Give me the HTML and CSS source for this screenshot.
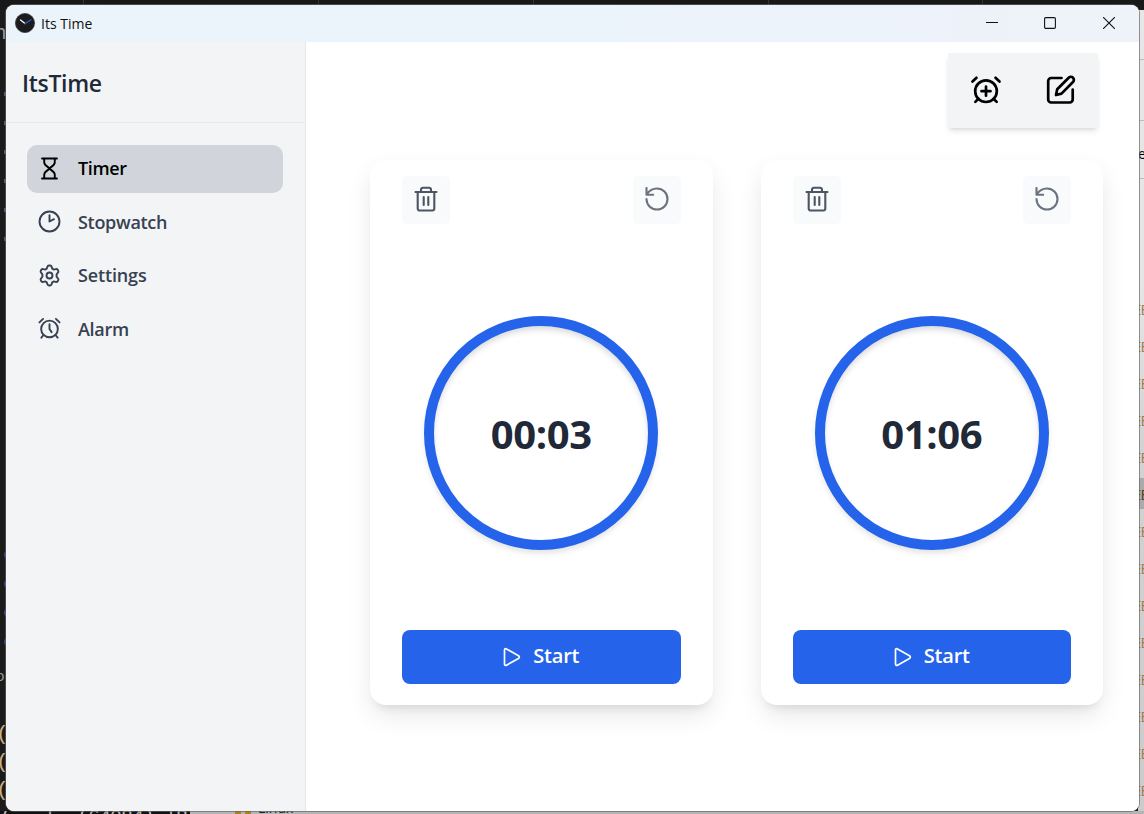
FILE: index.html
```html
<!DOCTYPE html>
<html lang="en">
<head>
<meta charset="utf-8">
<title>Its Time</title>
<link rel="stylesheet" href="styles.css">
</head>
<body>
<svg class="defs" width="0" height="0" aria-hidden="true">
  <symbol id="trash" viewBox="0 0 24 26"><path d="M1.500 6h21M7 6V3.600A2 2 0 0 1 9 1.800h6a2 2 0 0 1 2 1.800V6M3.700 6v16.500a2 2 0 0 0 2 2h12.600a2 2 0 0 0 2-2V6M9.700 11v8M14.300 11v8"/></symbol>
  <symbol id="reset" viewBox="0 0 24 24"><path d="M1.500 1v6.700h6.700M1.500 7.700C4 3.500 7.500 1.500 12 1.500A10.500 10.500 0 1 1 1.500 12"/></symbol>
  <symbol id="play" viewBox="0 0 18 20"><path d="M1.500 3v14c0 1.200 1 1.700 2 1.200l12-6.800c1.100-.6 1.100-2 0-2.600L3.500 1.900C2.500 1.300 1.500 1.900 1.500 3Z"/></symbol>
</svg>
<div class="desktop">
  <i class="tab-line t1"></i><i class="tab-line t2"></i><i class="tab-line t3"></i><i class="tab-line t4"></i><i class="tab-line t5"></i>
  <div class="editor">
    <span class="frag f-h">h</span><span class="frag f-o">o</span>
    <div class="dots"><i></i><i></i><i></i><i></i></div>
    <div class="ticks"><i></i><i></i><i></i><i></i><i></i><i></i></div>
    <div class="parens"><span>(</span><span>(</span><span>(</span></div>
  </div>
  <div class="panel">
    <i class="rule r1"></i><i class="rule r2"></i><i class="rule r3"></i><i class="mark"></i>
    <span class="panel-e">e</span>
    <div class="files"><span>EE</span><span>EE</span><span>EE</span><span>EE</span><span>EE</span><span class="current">EE</span><span>EE</span><span>EE</span><span>EE</span><span>EE</span><span>EE</span><span>EE</span><span>EE</span><span>EE</span></div>
  </div>
  <div class="taskline"><span class="code">( &nbsp; | &nbsp;(64084) |B</span><i class="penguin"></i><span class="linux">Linux</span></div>

  <div class="window">
    <header class="titlebar">
      <svg class="app-icon" viewBox="0 0 20 20"><circle cx="10" cy="10" r="9.600" fill="#1b1b1d" stroke="#3b4046" stroke-width=".8"/><path d="M5.500 7l4.500 3.600" stroke="#fff" stroke-width="1.300"/><path d="M10 10.600l6-3.800" stroke="#2e5da8" stroke-width="1.300"/></svg>
      <span class="app-name">Its Time</span>
      <div class="controls">
        <svg viewBox="0 0 12 12"><path d="M0 5.500h12"/></svg>
        <svg viewBox="0 0 12 12"><rect x=".6" y=".6" width="10.800" height="10.800" rx="1.200"/></svg>
        <svg viewBox="0 0 12 12"><path d="M.3.3l11.400 11.400M11.700.3L.3 11.700"/></svg>
      </div>
    </header>
    <div class="body">
      <aside class="sidebar">
        <div class="brand"><h1>ItsTime</h1></div>
        <nav>
          <a class="active"><svg viewBox="0 0 24 24"><path d="M4.200 1.500h15.600M4.200 22.500h15.600M6.500 1.500v4.200C6.500 9 12 11 12 12s-5.500 3-5.500 6.300v4.200M17.500 1.500v4.200C17.500 9 12 11 12 12s5.500 3 5.500 6.300v4.200"/></svg><span class="n-timer">Timer</span></a>
          <a><svg viewBox="0 0 24 24"><circle cx="12" cy="12" r="10.400"/><path d="M12 5.500V12l4.700-2.400"/></svg><span class="n-stop">Stopwatch</span></a>
          <a><svg viewBox="0 0 24 24"><circle cx="12" cy="12" r="3.100"/><path d="M9.700 3.100c.3-1.100.9-1.500 1.700-1.500h1.200c.8 0 1.400.4 1.700 1.500l.5 1.700 1.800 1 1.700-.4c1.100-.3 1.800 0 2.200.7l.6 1c.4.7.3 1.400-.5 2.200L19.400 10.800v2.400l1.200 1.500c.8.8.9 1.500.5 2.200l-.6 1c-.4.7-1.100 1-2.200.7l-1.700-.4-1.800 1-.5 1.700c-.3 1.100-.9 1.500-1.700 1.500h-1.200c-.8 0-1.400-.4-1.700-1.500l-.5-1.700-1.800-1-1.700.4c-1.100.3-1.800 0-2.200-.7l-.6-1c-.4-.7-.3-1.400.5-2.200l1.200-1.500v-2.400L3.400 9.300c-.8-.8-.9-1.500-.5-2.200l.6-1c.4-.7 1.100-1 2.200-.7l1.700.4 1.800-1Z"/></svg><span class="n-set">Settings</span></a>
          <a><svg viewBox="0 0 24 24"><circle cx="12" cy="12.500" r="8.700"/><path d="M12 7.500v5l2.200 3.300M1.500 5.600L5.300 2M22.500 5.600L18.700 2M5.800 18.800l-2.300 2.800M18.200 18.800l2.300 2.800"/></svg><span class="n-alarm">Alarm</span></a>
        </nav>
      </aside>
      <main>
        <div class="toolbar">
          <svg viewBox="0 0 32 32"><circle cx="16" cy="17.200" r="10.800"/><path d="M16 12.700v9M11.500 17.200h9M2.500 7.500l4-3.700M29.500 7.500l-4-3.700M8.500 24.800l-3.200 3.100M23.500 24.800l3.200 3.100"/></svg>
          <svg viewBox="0 0 32 32"><path d="M16.500 4H6.200a3 3 0 0 0-3 3v18.500a3 3 0 0 0 3 3h18.500a3 3 0 0 0 3-3V15.700M11 21l1.200-5.700L23.700 3.700a3 3 0 0 1 4.300 4.300L16.500 19.600Z"/></svg>
        </div>
        <div class="cards">
          <section class="card">
            <div class="actions"><button class="icon-btn"><svg class="i-trash"><use href="#trash"/></svg></button><button class="icon-btn reset"><svg class="i-reset"><use href="#reset"/></svg></button></div>
            <div class="dial"><span>00:03</span></div>
            <button class="start"><svg><use href="#play"/></svg><span>Start</span></button>
          </section>
          <section class="card">
            <div class="actions"><button class="icon-btn"><svg class="i-trash"><use href="#trash"/></svg></button><button class="icon-btn reset"><svg class="i-reset"><use href="#reset"/></svg></button></div>
            <div class="dial"><span>01:06</span></div>
            <button class="start"><svg><use href="#play"/></svg><span>Start</span></button>
          </section>
        </div>
      </main>
    </div>
  </div>
</div>
</body>
</html>
```
FILE: styles.css
```css
* { box-sizing: border-box; }
body { margin: 0; font-family: "Open Sans", "Noto Sans", sans-serif; }
button { border: 0; padding: 0; font: inherit; }
svg { fill: none; stroke: currentColor; stroke-linecap: round; stroke-linejoin: round; flex: none; }
.defs { position: absolute; }

.desktop { position: relative; width: 1144px; height: 814px; overflow: hidden; background: #181818; }
.tab-line { position: absolute; top: 0; width: 1px; height: 5px; background: #333; }
.t1 { left: 83px; } .t2 { left: 318px; } .t3 { left: 533px; } .t4 { left: 768px; } .t5 { left: 982px; }

.editor { position: absolute; left: 0; top: 10px; width: 6px; height: 804px; overflow: hidden; background: #1b1b1b; }
.frag { position: absolute; color: #999; font: 15px/18px "Liberation Sans", sans-serif; }
.f-h { left: -5px; top: 13px; font-size: 20px; }
.f-o { left: -4px; top: 657px; }
.dots { position: absolute; left: 4px; top: 541px; display: grid; gap: 21px; }
.dots i { width: 8px; height: 8px; border-radius: 50%; background: #2b4b9b; }
.ticks { position: absolute; left: 4px; top: 82px; display: grid; gap: 25px; }
.ticks i { width: 2px; height: 4px; background: #46607e; }
.parens { position: absolute; left: -1px; top: 711px; display: grid; color: #c9b089; font: 21px/28px "Liberation Mono", monospace; }
.parens span { margin-left: -3px; }

.panel { position: absolute; left: 1138px; top: 10px; width: 6px; height: 804px; overflow: hidden; background: linear-gradient(#e6e6e6, #e5e5e5 35%, #d2d2d2 55%, #cbcbcb); }
.rule { position: absolute; left: 0; width: 6px; height: 1px; background: #bdbdbd; }
.r1 { top: 49px; } .r2 { top: 110px; } .r3 { top: 168px; }
.mark { position: absolute; left: 0; top: 468px; width: 6px; height: 31px; background: #aaa; }
.panel-e { position: absolute; left: 0; top: 134px; font-size: 14px; line-height: 20px; }
.files { position: absolute; left: -5px; top: 281px; display: grid; color: #a37b4c; font: 15px/37px "Open Sans", sans-serif; letter-spacing: -.8px; }
.files .current { color: #5b3b18; }

.taskline { position: absolute; left: 0; top: 811px; width: 1144px; height: 3px; overflow: hidden; background: linear-gradient(90deg, #111 190px, #b4b4b4 190px); }
.taskline .code { position: absolute; left: 0; top: -3px; color: #bbb; font: 20px/20px "Liberation Mono", monospace; white-space: nowrap; letter-spacing: -1px; }
.penguin { position: absolute; left: 235px; top: 0; width: 16px; height: 3px; border: solid #a98513; border-width: 0 6px; }
.linux { position: absolute; left: 258px; top: -11px; font-size: 14px; line-height: 16px; color: #222; }

.window { position: absolute; left: 6px; top: 5px; width: 1133px; height: 806px; display: flex; flex-direction: column; border-radius: 8px; overflow: hidden; background: #fff; box-shadow: 0 0 0 1px rgba(100, 100, 100, .65); }
.titlebar { height: 37px; flex: none; display: flex; align-items: center; padding: 0 24px 1px 9px; background: linear-gradient(90deg, #eaf4fa, #ebf3fb 50%, #eef2f9); }
.app-icon { width: 20px; height: 20px; }
.app-name { margin-left: 6px; font-size: 14px; letter-spacing: 0; color: #111; }
.controls { margin-left: auto; display: flex; gap: 47px; }
.controls svg { width: 12px; height: 12px; color: #111; stroke-width: 1.1; }
.controls svg:first-child { margin-right: -1px; }

.body { flex: 1; display: flex; min-height: 0; }
.sidebar { width: 300px; flex: none; background: #f3f4f6; border-right: 1px solid #e5e7eb; }
.brand { height: 81px; padding: 1px 0 0 16px; display: flex; align-items: center; border-bottom: 1px solid #e5e7eb; }
.brand h1 { margin: 0; font-size: 23px; font-weight: 600; line-height: 32px; letter-spacing: -.3px; color: #1f2937; }
nav { display: grid; gap: 5.500px; padding: 22px 22px 0 21px; }
nav a { height: 48px; display: flex; align-items: center; gap: 17px; padding: 0 0 2px 11px; border-radius: 10px; color: #374151; font-size: 18px; font-weight: 600; letter-spacing: -.3px; }
nav svg { width: 23px; height: 23px; stroke-width: 2; }
.n-timer { letter-spacing: -.4px; }
.n-set { letter-spacing: -.15px; }
nav .active { background: #d1d5db; color: #000; }

main { flex: 1; display: flex; flex-direction: column; background: #fff; }
.toolbar { align-self: flex-end; width: 150px; height: 75px; margin: 11px 41px 0 0; display: flex; align-items: center; justify-content: space-between; padding: 0 21px 2px 22px; background: #f3f4f6; box-shadow: 0 4px 6px -1px rgba(0, 0, 0, .1), 0 2px 4px -2px rgba(0, 0, 0, .1); }
.toolbar svg { width: 32px; height: 32px; stroke-width: 2.700; color: #000; }
.cards { display: grid; grid-template-columns: 1fr 1fr; gap: 48px; margin: 32px 36px 0 64px; }
.card { height: 545px; display: flex; flex-direction: column; padding: 16px 32px 21px; border-radius: 16px; background: #fff; box-shadow: 0 11px 26px -2px rgba(0, 0, 0, .1), 0 8px 10px -6px rgba(0, 0, 0, .1); }
.actions { display: flex; justify-content: space-between; }
.icon-btn { width: 48px; height: 48px; padding-bottom: 2px; display: grid; place-items: center; border-radius: 5px; background: #f9fafb; color: #4b5563; }
.icon-btn.reset { color: #6b7280; }
.i-trash { width: 24px; height: 26px; stroke-width: 2.100; }
.i-reset { width: 24px; height: 24px; stroke-width: 2.100; }
.dial { width: 234px; height: 234px; margin: 92px auto auto; display: flex; align-items: center; justify-content: center; border: 10px solid #2563eb; border-radius: 50%; background: #fff; box-shadow: 0 4px 6px -1px rgba(0, 0, 0, .12), inset 0 4px 6px -1px rgba(0, 0, 0, .16); color: #1f2937; font-size: 40px; font-weight: 700; letter-spacing: -.35px; }
.start { height: 54px; padding-bottom: 3px; display: flex; align-items: center; justify-content: center; gap: 12px; border-radius: 8px; background: #2563eb; color: #fff; font-size: 20px; font-weight: 600; letter-spacing: -.2px; }
.start svg { width: 18px; height: 20px; margin-top: 2px; stroke-width: 1.700; }
```
